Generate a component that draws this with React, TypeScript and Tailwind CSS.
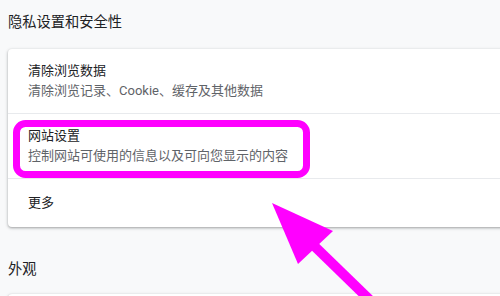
import React from "react";

const font = { fontFamily: 'Roboto, "Noto Sans CJK SC", sans-serif' };

function Row({ title, sub }: { title: string; sub?: string }) {
  return (
    <div className="px-5 py-3 border-b border-[#e8eaed]">
      <div className="text-[13px] leading-5 text-[#202124]">{title}</div>
      {sub && <div className="text-[13px] leading-5 text-[#5f6368]">{sub}</div>}
    </div>
  );
}

export default function App() {
  return (
    <div className="relative w-[500px] h-[296px] overflow-hidden bg-[#f8f9fa]" style={font}>
      <div className="pl-2">
        <div className="pt-3 pb-4 text-[14.25px] leading-[21px] text-[#202124]">隐私设置和安全性</div>
        <div className="w-[520px] bg-white rounded-[4px] shadow-[0_1px_2px_rgba(60,64,67,0.3),0_1px_3px_1px_rgba(60,64,67,0.15)]">
          <Row title="清除浏览数据" sub="清除浏览记录、Cookie、缓存及其他数据" />
          <Row title="网站设置" sub="控制网站可使用的信息以及可向您显示的内容" />
          <div className="px-5 h-12 flex items-center text-[13px] text-[#202124]">更多</div>
        </div>
        <div className="pt-8 pb-[15px] text-[14.25px] leading-5 text-[#202124]">外观</div>
        <div className="w-[520px] h-10 bg-white rounded-[4px] shadow-[0_1px_2px_rgba(60,64,67,0.3),0_1px_3px_1px_rgba(60,64,67,0.15)]" />
      </div>
      <svg className="absolute left-0 top-0" width="500" height="296" viewBox="0 0 500 296">
        <rect x="16.5" y="123.5" width="290" height="51" rx="9" ry="9" fill="none" stroke="#ff00ff" strokeWidth="7" />
        <polygon points="272,203 333,231 298,264" fill="#ff00ff" />
        <line x1="305" y1="237" x2="375" y2="305" stroke="#ff00ff" strokeWidth="10" />
      </svg>
    </div>
  );
}
